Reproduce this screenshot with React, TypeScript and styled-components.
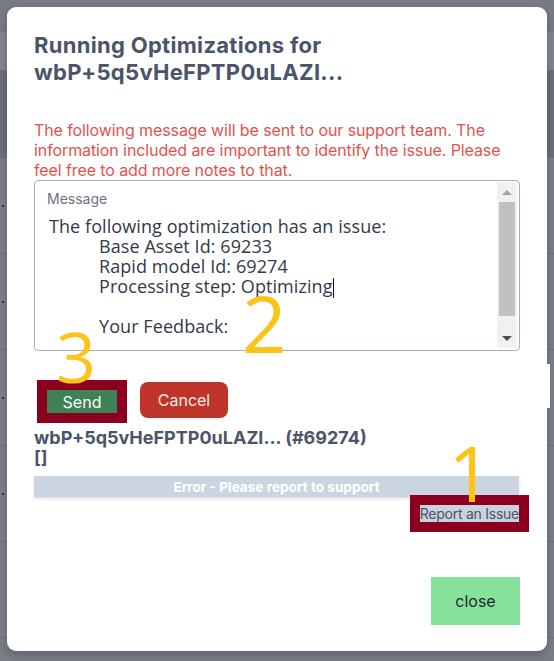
import React from "react";
import styled, { createGlobalStyle } from "styled-components";

const GlobalStyle = createGlobalStyle`
  html, body { margin: 0; padding: 0; }
  body { font-family: "Inter", "Liberation Sans", sans-serif; background: #7a7e87; }
  * { box-sizing: border-box; }
`;

const Page = styled.div`
  position: relative;
  width: 554px;
  height: 661px;
  overflow: hidden;
  background: #7a7e87;
  display: flex;
  flex-direction: column;
`;

const Band = styled.div<{ $h: number; $bg: string }>`
  height: ${(p) => p.$h}px;
  background: ${(p) => p.$bg};
  flex-shrink: 0;
`;

const BgRow = styled.div`
  height: 96px;
  flex-shrink: 0;
  border-bottom: 1px solid #6c7079;
  display: flex;
  align-items: center;
  padding-left: 2px;
  background: #7b7f88;
`;

const Dot = styled.span`
  width: 2px;
  height: 2px;
  background: #2e323a;
`;

const Modal = styled.div`
  position: absolute;
  top: 7px;
  left: 7px;
  width: 540px;
  height: 644px;
  background: #ffffff;
  border-radius: 9px;
  box-shadow: 0 4px 10px rgba(40, 45, 55, 0.35);
  padding: 25px 27px 26px 27px;
  display: flex;
  flex-direction: column;
`;

const Title = styled.h2`
  margin: 0;
  font-family: "Inter", sans-serif;
  font-weight: 700;
  font-size: 22px;
  letter-spacing: 0.3px;
  line-height: 27px;
  color: #4a5568;
`;

const Notice = styled.p`
  margin: 34px 0 0 0;
  font-family: "Inter", sans-serif;
  font-size: 16px;
  letter-spacing: -0.1px;
  line-height: 20px;
  color: #e3524d;
`;

const MessageBox = styled.div`
  height: 171px;
  border: 1px solid #a3afbf;
  border-radius: 4px;
  display: flex;
  overflow: hidden;
`;

const MessageInner = styled.div`
  flex: 1;
  padding: 9px 0 0 12px;
  display: flex;
  flex-direction: column;
`;

const MessageLabel = styled.div`
  font-family: "Inter", sans-serif;
  font-size: 14px;
  line-height: 17px;
  color: #6b7280;
`;

const MessageText = styled.div`
  margin-top: 9px;
  padding-left: 2px;
  font-family: "Open Sans", "Noto Sans", sans-serif;
  font-size: 18px;
  letter-spacing: 0.08px;
  line-height: 20px;
  color: #333a48;
`;

const Line = styled.div<{ $indent?: boolean }>`
  height: 20px;
  white-space: pre;
  padding-left: ${(p) => (p.$indent ? "50px" : "0")};
`;

const Caret = styled.span`
  display: inline-block;
  width: 1px;
  height: 20px;
  background: #111;
  vertical-align: -5px;
`;

const Scrollbar = styled.div`
  width: 20px;
  margin: 1px 2px 2px 0;
  background: #f1f1f1;
  display: flex;
  flex-direction: column;
  align-items: center;
`;

const Arrow = styled.div<{ $down?: boolean }>`
  height: 20px;
  width: 100%;
  display: flex;
  align-items: center;
  justify-content: center;
  &::before {
    content: "";
    width: 0;
    height: 0;
    border-left: 5px solid transparent;
    border-right: 5px solid transparent;
    ${(p) =>
      p.$down
        ? "border-top: 5px solid #505050;"
        : "border-bottom: 5px solid #a3a3a3;"}
  }
`;

const Thumb = styled.div`
  width: 16px;
  height: 114px;
  background: #c1c1c1;
`;

const Track = styled.div`
  flex: 1;
`;

const ButtonRow = styled.div`
  margin-top: 31px;
  display: flex;
  align-items: flex-start;
  gap: 23px;
  padding-left: 13px;
`;

const SendButton = styled.button`
  margin-top: 8px;
  width: 70px;
  height: 23px;
  border: none;
  padding: 0;
  background: #3d8154;
  color: #ffffff;
  font-family: "Inter", sans-serif;
  font-size: 16px;
  outline: 10px solid #8b001f;
`;

const CancelButton = styled.button`
  width: 88px;
  height: 36px;
  border: none;
  border-radius: 8px;
  background: #be3428;
  color: #f7ecea;
  font-family: "Inter", sans-serif;
  font-size: 16px;
`;

const ModelName = styled.div`
  margin-top: 10px;
  font-family: "Inter", sans-serif;
  font-weight: 700;
  font-size: 18px;
  line-height: 20px;
  color: #4a5568;
`;

const StatusBar = styled.div`
  margin-top: 8px;
  height: 21px;
  margin-right: 1px;
  background: #cbd5e1;
  box-shadow: 0 2px 3px rgba(0, 0, 0, 0.12);
  color: #ffffff;
  font-family: "Inter", sans-serif;
  font-weight: 700;
  font-size: 13.6px;
  display: flex;
  align-items: center;
  justify-content: center;
`;

const ReportRow = styled.div`
  display: flex;
  justify-content: flex-end;
  margin-top: 8px;
  padding-right: 1px;
`;

const ReportLink = styled.span`
  background: #c9d2df;
  color: #4b5563;
  font-family: "Inter", sans-serif;
  font-size: 14px;
  letter-spacing: -0.25px;
  line-height: 17px;
  outline: 10px solid #8b001f;
`;

const CloseButton = styled.button`
  margin-top: auto;
  align-self: flex-end;
  width: 89px;
  height: 48px;
  border: none;
  background: #86e29b;
  color: #1f2937;
  font-family: "Inter", sans-serif;
  font-size: 16px;
`;

const Marker = styled.div<{ $x: number; $y: number; $size: number }>`
  position: absolute;
  left: ${(p) => p.$x}px;
  top: ${(p) => p.$y}px;
  font-family: "Open Sans", sans-serif;
  font-size: ${(p) => p.$size}px;
  line-height: 1;
  color: #fcc419;
  pointer-events: none;
`;

const EdgePatch = styled.div`
  position: absolute;
  left: 547px;
  top: 364px;
  width: 3px;
  height: 44px;
  background: #ffffff;
`;

export default function App() {
  return (
    <>
      <GlobalStyle />
      <Page>
        <Band $h={32} $bg="#777b84" />
        <Band $h={38} $bg="#82868e" />
        <Band $h={88} $bg="#6a707b" />
        <BgRow><Dot /></BgRow>
        <BgRow><Dot /></BgRow>
        <BgRow><Dot /></BgRow>
        <BgRow><Dot /></BgRow>
        <BgRow />

        <Modal>
          <Title>
            Running Optimizations for
            <br />
            wbP+5q5vHeFPTP0uLAZI...
          </Title>
          <Notice>
            The following message will be sent to our support team. The
            information included are important to identify the issue. Please
            feel free to add more notes to that.
          </Notice>
          <MessageBox>
            <MessageInner>
              <MessageLabel>Message</MessageLabel>
              <MessageText>
                <Line>The following optimization has an issue:</Line>
                <Line $indent>Base Asset Id: 69233</Line>
                <Line $indent>Rapid model Id: 69274</Line>
                <Line $indent>
                  Processing step: Optimizing
                  <Caret />
                </Line>
                <Line />
                <Line $indent>Your Feedback:</Line>
              </MessageText>
            </MessageInner>
            <Scrollbar>
              <Arrow />
              <Thumb />
              <Track />
              <Arrow $down />
            </Scrollbar>
          </MessageBox>
          <ButtonRow>
            <SendButton>Send</SendButton>
            <CancelButton>Cancel</CancelButton>
          </ButtonRow>
          <ModelName>
            wbP+5q5vHeFPTP0uLAZI... (#69274)
            <br />
            []
          </ModelName>
          <StatusBar>Error - Please report to support</StatusBar>
          <ReportRow>
            <ReportLink>Report an Issue</ReportLink>
          </ReportRow>
          <CloseButton>close</CloseButton>
        </Modal>

        <EdgePatch />
        <Marker $x={448} $y={434} $size={77}>1</Marker>
        <Marker $x={242} $y={284} $size={78}>2</Marker>
        <Marker $x={56} $y={321} $size={70}>3</Marker>
      </Page>
    </>
  );
}
